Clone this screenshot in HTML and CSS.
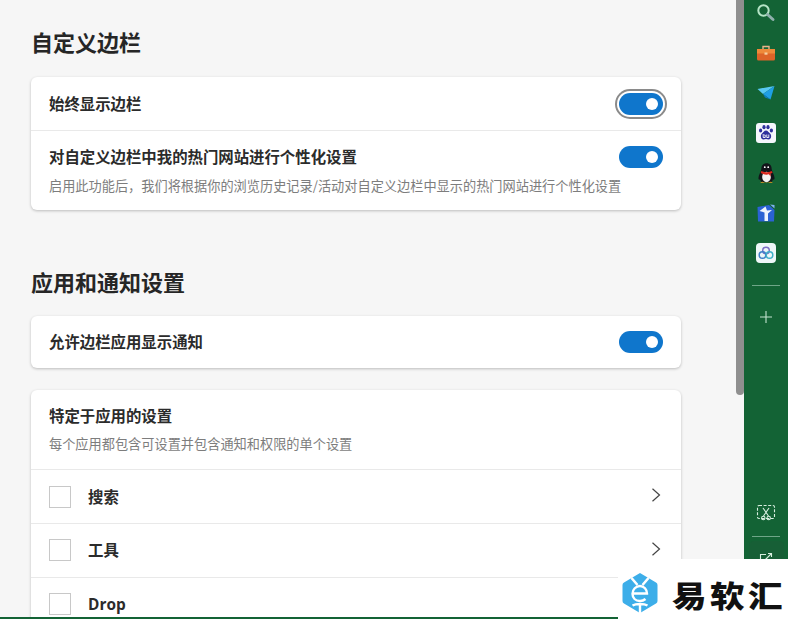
FILE: index.html
```html
<!DOCTYPE html>
<html lang="zh-CN">
<head>
<meta charset="utf-8">
<title>边栏设置</title>
<link rel="stylesheet" href="styles.css">
</head>
<body>
<div class="app">
  <main class="main">
    <h2 class="heading">自定义边栏</h2>
    <section class="card">
      <div class="row row-simple">
        <span class="title">始终显示边栏</span>
        <span class="toggle focused"></span>
      </div>
      <div class="row row-desc">
        <div class="texts">
          <div class="title">对自定义边栏中我的热门网站进行个性化设置</div>
          <div class="desc">启用此功能后，我们将根据你的浏览历史记录/活动对自定义边栏中显示的热门网站进行个性化设置</div>
        </div>
        <span class="toggle"></span>
      </div>
    </section>

    <h2 class="heading second">应用和通知设置</h2>
    <section class="card">
      <div class="row row-simple single">
        <span class="title">允许边栏应用显示通知</span>
        <span class="toggle"></span>
      </div>
    </section>

    <section class="card apps">
      <div class="apps-head">
        <div class="title">特定于应用的设置</div>
        <div class="desc">每个应用都包含可设置并包含通知和权限的单个设置</div>
      </div>
      <div class="app-row">
        <span class="app-icon"></span><span class="title app-name">搜索</span>
        <svg class="chev" viewBox="0 0 10 14"><path d="M1.5 .8 8.5 7 1.5 13.2"/></svg>
      </div>
      <div class="app-row">
        <span class="app-icon"></span><span class="title app-name">工具</span>
        <svg class="chev" viewBox="0 0 10 14"><path d="M1.5 .8 8.5 7 1.5 13.2"/></svg>
      </div>
      <div class="app-row">
        <span class="app-icon"></span><span class="title app-name">Drop</span>
        <svg class="chev" viewBox="0 0 10 14"><path d="M1.5 .8 8.5 7 1.5 13.2"/></svg>
      </div>
    </section>
  </main>

  <div class="scrollbar"><div class="thumb"></div></div>

  <aside class="sidebar">
    <div class="item">
      <svg class="ic" viewBox="0 0 20 20"><circle cx="7.500" cy="7.500" r="5.200" fill="none" stroke="#b5e4c6" stroke-width="2"/><path d="M11.500 11.500 17 16.500" stroke="#8fb0ac" stroke-width="3" stroke-linecap="round"/></svg>
    </div>
    <div class="item">
      <svg class="ic ic-low" viewBox="0 0 20 20"><path d="M7 5V2.500h6V5" fill="none" stroke="#e9b48a" stroke-width="1.400"/><rect x="1" y="5" width="18" height="11.500" rx="1.500" fill="#dd6428"/><rect x="1" y="5" width="18" height="4.500" fill="#ee8a3a"/><rect x="8.500" y="8.500" width="3" height="2.200" fill="#f5d0a0"/></svg>
    </div>
    <div class="item">
      <svg class="ic" viewBox="0 0 20 20"><path d="M1.500 6 18.500 3 7 11Z" fill="#58c8f2"/><path d="M7 11 18.500 3 14.500 16.500Z" fill="#1f9fe4"/><path d="M7 11 14.500 16.500 9 14.500Z" fill="#0d7cc0"/></svg>
    </div>
    <div class="item">
      <svg class="ic" viewBox="0 0 20 20"><rect width="20" height="20" rx="3" fill="#f4f6fc"/><g fill="#2c2f9c"><ellipse cx="4.600" cy="7.400" rx="1.600" ry="2"/><ellipse cx="8" cy="4.200" rx="1.600" ry="2.100"/><ellipse cx="12" cy="4.200" rx="1.600" ry="2.100"/><ellipse cx="15.400" cy="7.400" rx="1.600" ry="2"/><path d="M10 7.500c2 0 2.600 2 4 3 2 1.500 1.300 6-1.500 6-1 0-1.500-.4-2.500-.4s-1.500.4-2.500.4c-2.800 0-3.500-4.500-1.500-6 1.400-1 2-3 4-3Z"/></g><path d="M7.200 11v3.500h2v-2.500h-1M10.800 11.500v3h2v-3" fill="none" stroke="#fff" stroke-width=".9"/></svg>
    </div>
    <div class="item">
      <svg class="ic ic-big" viewBox="0 0 20 20"><path d="M10 1c3 0 4.500 2.300 4.500 5 0 2 2.500 5 2.500 8 0 2-1 1.500-1.500 1 0 1.500-.8 2-1.500 2.500H6c-.7-.5-1.500-1-1.500-2.500-.5.5-1.500 1-1.500-1 0-3 2.500-6 2.500-8 0-2.700 1.500-5 4.500-5Z" fill="#12141a"/><ellipse cx="10" cy="13" rx="3.800" ry="4.500" fill="#f3f3f3"/><path d="M5.500 7.800c3 1.500 6 1.500 9 0l.8 1.500-2 1 .5 2.500-1.800-2.100c-1.700.5-3.300.3-5-.2L5 9.500Z" fill="#d9281e"/><path d="M4.500 18c1-1.200 3-1 3.500-.2H12c.5-.8 2.500-1 3.500.2Z" fill="#e8a020"/><circle cx="8.500" cy="4.500" r=".8" fill="#fff"/><circle cx="11.500" cy="4.500" r=".8" fill="#fff"/></svg>
    </div>
    <div class="item">
      <svg class="ic" viewBox="0 0 20 20"><path d="M1.500 4 13 2 18.500 7 18 18.500 2 18.500Z" fill="#2b62d4"/><path d="M14 1.500l4.500 4V2Z" fill="#7fb0f0"/><path d="M3.500 8 9.500 3.500 11 7.500 16 7 12 10.500V18H8.500V9.500Z" fill="#eef4fc"/></svg>
    </div>
    <div class="item">
      <svg class="ic" viewBox="0 0 20 20"><rect width="20" height="20" rx="4" fill="#eef7f8"/><circle cx="10" cy="7.500" r="3.300" fill="none" stroke="#7c6ec4" stroke-width="1.500"/><circle cx="6.500" cy="12" r="3.300" fill="none" stroke="#3f7fc8" stroke-width="1.500"/><circle cx="13.500" cy="12" r="3.300" fill="none" stroke="#3fb0c8" stroke-width="1.500"/></svg>
    </div>
    <div class="rule rule-top"></div>
    <div class="item">
      <svg class="ic-sm" viewBox="0 0 14 14"><path d="M7 1v12M1 7h12" stroke="#c4e4d0" stroke-width="1.100" fill="none"/></svg>
    </div>
    <div class="item item-cut">
      <svg class="ic" viewBox="0 0 20 20" fill="none" stroke="#d8efe0" stroke-width="1.100"><rect x="1.500" y="2.500" width="17" height="13" rx="1.500" stroke-dasharray="3 1.600"/><path d="M7 5l5.500 8M13 5l-5.500 8"/><circle cx="7.300" cy="15" r="1.700"/><circle cx="12.700" cy="15" r="1.700"/></svg>
    </div>
    <div class="rule rule-low"></div>
    <div class="item-box">
      <svg class="ic-share" viewBox="0 0 14 14" fill="none" stroke="#d8efe0" stroke-width="1.100"><path d="M7 2.500H1.500v10h10V7.500M6.500 7.500 12.500 1.500M9 1.500h3.500V5"/></svg>
    </div>
  </aside>
</div>

<div class="greenline"></div>
<div class="brand">
  <svg class="brand-logo" viewBox="0 0 36 40">
    <path d="M18 0 34 9.500a3 3 0 0 1 1.500 2.600v15.800a3 3 0 0 1-1.500 2.600L18 40 2 30.500a3 3 0 0 1-1.500-2.600V12.100A3 3 0 0 1 2 9.500Z" fill="#3daee9"/>
    <path d="M9.500 5 15.500 12M26.500 5 20.500 12" fill="none" stroke="#fff" stroke-width="2.600"/>
    <path d="M11.500 20.500h13.500c0-4-3-7.500-7-7.500s-7.500 3.400-7.500 7.700 3 7.300 7.500 7.300c2 0 4-.7 5.500-2" fill="none" stroke="#fff" stroke-width="2.400"/>
    <path d="M18 31v9M10.500 32.500c2-1.200 3.500-1.500 7.500-1.500s5.500.3 7.500 1.500" fill="none" stroke="#fff" stroke-width="2.400"/>
  </svg>
  <span class="brand-name">易软汇</span>
</div>
</body>
</html>
```
FILE: styles.css
```css
* { box-sizing: border-box; }
html, body {
  margin: 0;
  height: 619px;
  overflow: hidden;
}
body {
  position: relative;
  font-family: "Noto Sans CJK SC", "Noto Sans", sans-serif;
  color: #262626;
  background: #f6f6f6;
}
.app {
  display: flex;
  height: 619px;
}
.main {
  width: 736px;
  flex: none;
  padding: 26px 55px 0 31px;
  overflow: hidden;
  background: #f6f6f6;
}
.heading {
  margin: 0 0 21px;
  font-size: 22px;
  line-height: 30px;
  font-weight: 700;
  color: #262626;
}
.heading.second {
  margin: 56px 0 20px;
}
.card {
  background: #fff;
  border-radius: 6px;
  box-shadow: 0 1px 3px rgba(0, 0, 0, .24);
}
.apps {
  margin-top: 22px;
}
.row {
  display: flex;
  align-items: center;
  justify-content: space-between;
  padding: 0 18px;
}
.row-simple {
  height: 54px;
  border-bottom: 1px solid #e9e9e9;
}
.row-simple.single {
  height: 52px;
  border-bottom: 0;
}
.row-simple .title {
  margin-top: 2px;
}
.row-desc {
  height: 79px;
  align-items: flex-start;
  padding-top: 15px;
}
.texts {
  flex: 1;
  min-width: 0;
}
.title {
  font-family: "Open Sans", "Noto Sans CJK SC", sans-serif;
  font-size: 15.4px;
  line-height: 24px;
  font-weight: 700;
  color: #2b2b2b;
}
.desc {
  font-size: 13.2px;
  line-height: 20px;
  margin-top: 5px;
  color: #7d7d7d;
  white-space: nowrap;
}
.row-desc .desc {
  margin-top: 6px;
}
.toggle {
  position: relative;
  flex: none;
  width: 44px;
  height: 22px;
  border-radius: 11px;
  background: #0f76cc;
}
.toggle::after {
  content: "";
  position: absolute;
  right: 5px;
  top: 5px;
  width: 12px;
  height: 12px;
  border-radius: 50%;
  background: #fff;
}
.toggle.focused {
  box-shadow: 0 0 0 2px #fff, 0 0 0 4px #8a8a8a;
}
.apps-head {
  height: 80px;
  padding: 15px 18px 0;
  border-bottom: 1px solid #e9e9e9;
}
.app-row {
  display: flex;
  align-items: center;
  height: 54px;
  padding: 0 20px 0 18px;
  border-bottom: 1px solid #e9e9e9;
}
.app-row + .app-row .app-icon {
  margin-top: -2px;
}
.app-icon {
  flex: none;
  width: 22px;
  height: 22px;
  border: 1px solid #c8c8c8;
}
.app-name {
  margin: 2px 0 0 17px;
  flex: 1;
}
.app-row + .app-row .app-name {
  margin-top: 0;
}
.chev {
  width: 10px;
  height: 14px;
  fill: none;
  stroke: #444;
  stroke-width: 1.2;
  margin-top: -4px;
}
.scrollbar {
  width: 8px;
  flex: none;
  background: #f6f6f6;
}
.thumb {
  height: 395px;
  background: #8f8f8f;
  border-radius: 0 0 4px 4px;
}
.sidebar {
  width: 44px;
  flex: none;
  height: 619px;
  background: #136335;
  display: flex;
  flex-direction: column;
  align-items: center;
  overflow: hidden;
}
.item {
  flex: none;
  width: 44px;
  height: 40px;
  display: flex;
  align-items: center;
  justify-content: center;
}
.item:first-child {
  margin-top: -7px;
}
.ic {
  width: 20px;
  height: 20px;
}
.ic-low {
  margin-top: 2px;
}
.ic-big {
  width: 23px;
  height: 23px;
}
.ic-sm {
  width: 14px;
  height: 14px;
}
.rule {
  flex: none;
  width: 28px;
  height: 1px;
  background: #6fa688;
}
.rule-top {
  margin: 12px 0 11px;
}
.item-cut {
  margin-top: 156px;
}
.rule-low {
  margin-top: 3px;
}
.item-box {
  flex: none;
  width: 35px;
  height: 36px;
  margin-top: 4px;
  border-radius: 5px;
  background: #175f36;
  display: flex;
  align-items: center;
  justify-content: center;
}
.ic-share {
  width: 14px;
  height: 14px;
}
.greenline {
  position: absolute;
  left: 0;
  bottom: 0;
  width: 618px;
  height: 2px;
  background: #136335;
}
.brand {
  position: absolute;
  left: 618px;
  top: 559px;
  width: 170px;
  height: 60px;
  background: #fff;
  display: flex;
  align-items: flex-start;
  padding: 14px 0 0 4px;
}
.brand-logo {
  width: 36px;
  height: 40px;
  flex: none;
}
.brand-name {
  margin: 1px 0 0 14px;
  font-size: 30px;
  line-height: 40px;
  letter-spacing: 3px;
  font-weight: 900;
  color: #111;
  white-space: nowrap;
  transform: scaleX(1.15);
  transform-origin: left center;
}
```
